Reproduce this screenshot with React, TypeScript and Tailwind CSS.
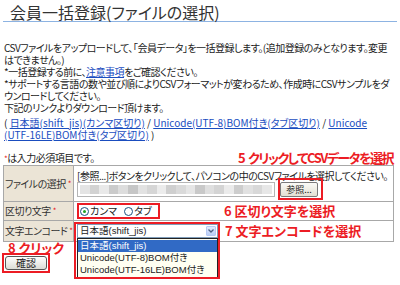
import React from "react";

const mosaic = [
  "bg-[#e4e4e4]", "bg-[#d2d2d2]", "bg-[#e9e9e9]", "bg-[#cbcbcb]", "bg-[#dddddd]",
  "bg-[#c6c6c6]", "bg-[#e2e2e2]", "bg-[#d6d6d6]", "bg-[#ececec]", "bg-[#cfcfcf]",
  "bg-[#dadada]", "bg-[#e6e6e6]", "bg-[#c9c9c9]", "bg-[#dfdfdf]", "bg-[#d4d4d4]",
  "bg-[#ebebeb]", "bg-[#cdcdcd]", "bg-[#e1e1e1]", "bg-[#d8d8d8]", "bg-[#e7e7e7]",
];

function Req() {
  return <span className="ml-[2px] text-[8px] text-[#e8141c]">*</span>;
}

function Radio({ checked }: { checked?: boolean }) {
  return (
    <span className="flex h-[9px] w-[9px] items-center justify-center rounded-full border border-[#1c5180] bg-white">
      {checked && <span className="h-[3px] w-[3px] rounded-full bg-[#21a121]" />}
    </span>
  );
}

export default function App() {
  const link = "text-[#1a4dbf] underline";
  const note = "font-bold text-[13px] text-[#ec1c24]";
  const jp = "tracking-[-0.5px]";
  return (
    <div className="h-[285px] w-[400px] overflow-hidden bg-white text-[#222] font-['Noto_Sans_CJK_JP',sans-serif] [font-feature-settings:'palt']">
      <div className="mx-[3px] h-[22px] border-b border-[#8db3e2] pl-[7px] pt-[2px]">
        <h1 className="text-[16px] leading-[20px] text-[#333]">会員一括登録(ファイルの選択)</h1>
      </div>

      <div className="mt-[20px] whitespace-nowrap px-[4px] text-[10px] leading-[12px]">
        <p className={jp}>CSVファイルをアップロードして、「会員データ」を一括登録します。(追加登録のみとなります。変更</p>
        <p className={jp}>はできません。)</p>
        <p className={jp}>
          *一括登録する前に、<a className={link}>注意事項</a>をご確認ください。
        </p>
        <p className={jp}>*サポートする言語の数や並び順によりCSVフォーマットが変わるため、作成時にCSVサンプルをダ</p>
        <p className={jp}>ウンロードしてください。</p>
        <p className={jp}>下記のリンクよりダウンロード頂けます。</p>
        <p className="mt-[3px]">
          ( <a className={link}>日本語(shift_jis)(カンマ区切り)</a> / <a className={link}>Unicode(UTF-8)BOM付き(タブ区切り)</a> / <a className={link}>Unicode</a>
        </p>
        <p>
          <a className={link}>(UTF-16LE)BOM付き(タブ区切り)</a> )
        </p>
        <div className="mt-[8px] flex h-[16px] items-end justify-between">
          <p className={jp}>
            <span className="text-[8px] text-[#e8141c]">*</span>は入力必須項目です。
          </p>
          <p className={`${note} pr-[3px] leading-[15px] tracking-[-1.5px]`}>
            <span className="mr-[4px]">5</span>クリックしてCSVデータを選択
          </p>
        </div>
      </div>

      <div className="ml-[3px] grid w-[391px] grid-cols-[69px_319px] grid-rows-[35px_18px_20px] gap-px border border-[#a8a8a8] bg-[#a8a8a8] text-[10px] leading-[12px]">
        <div className="flex items-center whitespace-nowrap bg-[#ebe4d6] pl-[1px] tracking-[-0.5px] text-[#333]">
          ファイルの選択<Req />
        </div>
        <div className="bg-white pl-[3px] pt-[4px]">
          <p className="whitespace-nowrap tracking-[-0.5px]">[参照...]ボタンをクリックして、パソコンの中のCSVファイルを選択してください。</p>
          <div className="flex items-center">
            <div className="grid h-[15px] w-[198px] grid-cols-[repeat(20,1fr)] border border-[#b5b5b5] bg-white p-[2px]">
              {mosaic.map((c, i) => (
                <div key={i} className={c} />
              ))}
            </div>
            <div className="relative ml-[5px]">
              <button className="flex h-[15px] w-[38px] items-center justify-center rounded-[2px] border border-[#7a7a7a] bg-gradient-to-b from-[#fbfbf8] to-[#e3e0d2] text-[9px] leading-none text-[#222]">
                参照...
              </button>
              <div className="absolute -bottom-[3px] -left-[2px] -right-[5px] -top-[4px] border-2 border-[#ec1c24]" />
            </div>
          </div>
        </div>

        <div className="flex items-center whitespace-nowrap bg-[#ebe4d6] pl-[1px] tracking-[-0.5px] text-[#333]">
          区切り文字<Req />
        </div>
        <div className="flex items-center bg-white pl-[3px]">
          <div className="flex h-[16px] w-[83px] items-center border-2 border-[#ec1c24] pl-[1px]">
            <Radio checked />
            <span className="ml-[1px]">カンマ</span>
            <span className="ml-[7px]">
              <Radio />
            </span>
            <span className="ml-[1px]">タブ</span>
          </div>
          <p className={`${note} ml-[64px] leading-[14px]`}>6 区切り文字を選択</p>
        </div>

        <div className="flex items-center whitespace-nowrap bg-[#ebe4d6] pl-[1px] tracking-[-0.5px] text-[#333]">
          文字エンコード<Req />
        </div>
        <div className="flex items-center bg-white pl-[3px]">
          <div className="relative z-10 h-[14px] w-[141px] text-[9.5px]">
            <div className="flex h-full items-center border border-[#7f9db9] bg-white pl-[2px] font-['Liberation_Sans','Noto_Sans_CJK_JP',sans-serif]">
              <span className="flex-1">日本語(shift_jis)</span>
              <span className="mr-px flex h-[10px] w-[10px] items-center justify-center rounded-[1px] border border-[#b6c9f3] bg-gradient-to-b from-[#e2ebfd] to-[#b9cdf7]">
                <svg width="6" height="4" viewBox="0 0 6 4">
                  <path d="M0.5 0.5 L3 3 L5.5 0.5" fill="none" stroke="#4d6185" strokeWidth="1.3" />
                </svg>
              </span>
            </div>
            <ul className="absolute left-0 top-[14px] w-[141px] border border-[#222] bg-[#fffff2] py-px font-['Liberation_Sans','Noto_Sans_CJK_JP',sans-serif]">
              <li className="h-[12px] bg-[#316ac5] pl-[2px] text-white">日本語(shift_jis)</li>
              <li className="h-[12px] pl-[2px]">Unicode(UTF-8)BOM付き</li>
              <li className="h-[12px] pl-[2px]">Unicode(UTF-16LE)BOM付き</li>
            </ul>
            <div className="absolute -left-[3px] -top-[2px] h-[57px] w-[146px] border-2 border-[#ec1c24]" />
          </div>
          <p className={`${note} ml-[7px] leading-[14px]`}>7 文字エンコードを選択</p>
        </div>
      </div>

      <p className={`${note} ml-[8px] leading-[11px]`}>8 クリック</p>
      <div className="ml-[2px] flex h-[20px] w-[48px] items-center justify-center border-2 border-[#ec1c24]">
        <button className="flex h-[14px] w-[42px] items-center justify-center rounded-[3px] border border-[#555] bg-gradient-to-b from-white to-[#dcdcd6] text-[10px] leading-none text-[#222]">
          確認
        </button>
      </div>
    </div>
  );
}
